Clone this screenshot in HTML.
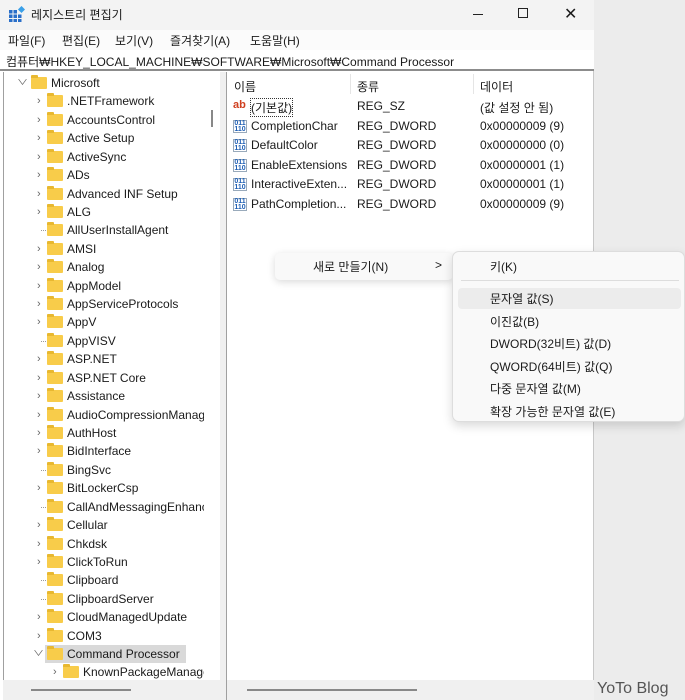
<!DOCTYPE html>
<html><head><meta charset="utf-8"><style>
*{margin:0;padding:0;box-sizing:border-box}
body{width:685px;height:700px;overflow:hidden;background:#ececec;font-family:"Liberation Sans","Noto Sans CJK KR",sans-serif;font-size:12px;color:#1a1a1a;position:relative}
.abs{position:absolute;white-space:nowrap}
.win{left:0;top:0;width:594px;height:700px;background:#fff;border-right:1px solid #c8c8c8}
.title{left:0;top:0;width:594px;height:30px;background:#f3f3f3}
.menu{left:0;top:30px;width:594px;height:20px;background:#fbfbfb}
.menu span{position:absolute;top:2px;font-size:12px;white-space:nowrap}
.addr{left:0;top:50px;width:594px;height:21px;background:#fff;border-bottom:2px solid #8c8c8c;font-size:12px;padding:3px 0 0 6px;white-space:nowrap}
.tree{left:3px;top:72px;width:217px;height:628px;background:#fff;border-left:1px solid #a0a0a0;overflow:hidden}
.row{position:absolute;height:18px;white-space:nowrap;font-size:12px;line-height:18px;overflow:hidden}
.fold{position:absolute;width:16px;height:12px;background:#f8cc4a;border-radius:1px;top:3px}
.fold:before{content:"";position:absolute;left:0;top:-2px;width:7px;height:3px;background:#e8b830;border-radius:1px 1px 0 0}
.chev{position:absolute;font-size:11px;color:#666;top:0}
.vsb{left:211px;top:110px;width:2px;height:17px;background:#888}
.hbar1{left:3px;top:680px;width:217px;height:20px;background:#f0f0f0}
.hbar2{left:227px;top:680px;width:367px;height:20px;background:#f0f0f0}
.split{left:220px;top:72px;width:7px;height:628px;background:#f0f0f0;border-right:1px solid #a0a0a0}
.hdr span{position:absolute;top:78px;font-size:12px;white-space:nowrap}
.ic{position:absolute;width:14px;height:13px;font-size:7px;font-weight:bold;line-height:6px;color:#1f5fb4;text-align:center;border:1px solid #9ab;padding-top:0}
.menu2{left:452px;top:251px;width:233px;height:171px;background:#f9f9f9;border:1px solid #ddd;border-radius:7px;box-shadow:0 4px 10px rgba(0,0,0,.15)}
.mi{position:absolute;left:37px;font-size:12px;white-space:nowrap}
</style></head><body>
<div class="abs win"></div>
<div class="abs title">
<svg class="abs" style="left:9px;top:6px" width="16" height="16"><g fill="#2a6fc9"><rect x="0" y="4" width="3.5" height="3.5"/><rect x="4.5" y="4" width="3.5" height="3.5"/><rect x="0" y="8.5" width="3.5" height="3.5"/><rect x="4.5" y="8.5" width="3.5" height="3.5"/><rect x="9" y="8.5" width="3.5" height="3.5"/><rect x="0" y="13" width="3.5" height="3"/><rect x="4.5" y="13" width="3.5" height="3"/><rect x="9" y="13" width="3.5" height="3"/></g><rect x="10" y="1" width="5" height="5" fill="#3aa0e8" transform="rotate(45 12.5 3.5)"/></svg>
<span class="abs" style="left:31px;top:6px;font-size:12px">레지스트리 편집기</span>
<div class="abs" style="left:473px;top:14px;width:10px;height:1px;background:#222"></div>
<div class="abs" style="left:518px;top:8px;width:10px;height:10px;border:1px solid #222"></div>
<span class="abs" style="left:564px;top:4px;font-size:16px;font-weight:300">✕</span>
</div>
<div class="abs menu"><span style="left:8px">파일(F)</span><span style="left:62px">편집(E)</span><span style="left:115px">보기(V)</span><span style="left:170px">즐겨찾기(A)</span><span style="left:250px">도움말(H)</span></div>
<div class="abs addr">컴퓨터₩HKEY_LOCAL_MACHINE₩SOFTWARE₩Microsoft₩Command Processor</div>
<div class="abs tree" id="tree"></div>
<div class="abs vsb"></div>
<div class="abs hbar1"><div class="abs" style="left:28px;top:9px;width:100px;height:2px;background:#888"></div></div>
<div class="abs split"></div>
<div class="abs hbar2"><div class="abs" style="left:20px;top:9px;width:170px;height:2px;background:#888"></div></div>
<div class="abs hdr"><span style="left:234px">이름</span><span style="left:357px">종류</span><span style="left:480px">데이터</span>
<div class="abs" style="left:350px;top:74px;width:1px;height:20px;background:#e5e5e5"></div>
<div class="abs" style="left:473px;top:74px;width:1px;height:20px;background:#e5e5e5"></div></div>
<div id="vals"></div>
<div class="abs" style="left:275px;top:253px;width:178px;height:27px;background:#f9f9f9;border-radius:5px;box-shadow:0 2px 8px rgba(0,0,0,.15)">
<span class="abs" style="left:38px;top:5px">새로 만들기(N)</span><span class="abs" style="left:160px;top:5px">&gt;</span></div>
<div class="abs menu2">
<span class="mi" style="top:6px">키(K)</span>
<div class="abs" style="left:8px;top:28px;width:218px;height:1px;background:#ddd"></div>
<div class="abs" style="left:5px;top:36px;width:223px;height:21px;background:#ececec;border-radius:4px"></div>
<span class="mi" style="top:38px">문자열 값(S)</span>
<span class="mi" style="top:61px">이진값(B)</span>
<span class="mi" style="top:83px">DWORD(32비트) 값(D)</span>
<span class="mi" style="top:106px">QWORD(64비트) 값(Q)</span>
<span class="mi" style="top:128px">다중 문자열 값(M)</span>
<span class="mi" style="top:151px">확장 가능한 문자열 값(E)</span>
</div>
<span class="abs" style="left:597px;top:680px;font-size:16px;color:#555">YoTo Blog</span>
<script>
var items=[["Microsoft",0,"v"],[".NETFramework",1,">"],["AccountsControl",1,">"],["Active Setup",1,">"],["ActiveSync",1,">"],["ADs",1,">"],["Advanced INF Setup",1,">"],["ALG",1,">"],["AllUserInstallAgent",1,""],["AMSI",1,">"],["Analog",1,">"],["AppModel",1,">"],["AppServiceProtocols",1,">"],["AppV",1,">"],["AppVISV",1,""],["ASP.NET",1,">"],["ASP.NET Core",1,">"],["Assistance",1,">"],["AudioCompressionManager",1,">"],["AuthHost",1,">"],["BidInterface",1,">"],["BingSvc",1,""],["BitLockerCsp",1,">"],["CallAndMessagingEnhancement",1,""],["Cellular",1,">"],["Chkdsk",1,">"],["ClickToRun",1,">"],["Clipboard",1,""],["ClipboardServer",1,""],["CloudManagedUpdate",1,">"],["COM3",1,">"],["Command Processor",1,"v"],["KnownPackageManager",2,">"]];
var h="";items.forEach(function(it,i){var y=2+i*18.42;var x=it[1]==0?0:it[1]==1?16:32;
if(i==31)h+='<div class="abs" style="left:41px;top:'+(y)+'px;width:141px;height:18px;background:#d9d9d9"></div>';
h+='<div class="row" style="left:0;top:'+y+'px;width:200px">';
if(it[2]=="v")h+='<span class="chev" style="left:'+(x+13)+'px;transform:scaleY(.7)">∨</span>';
else if(it[2]==">")h+='<span class="chev" style="left:'+(x+17)+'px">›</span>';
else h+='<span class="abs" style="left:'+(x+21)+'px;top:9px;width:7px;border-top:1px dotted #999"></span>';
h+='<span class="fold" style="left:'+(x+27)+'px"></span><span class="abs" style="left:'+(x+47)+'px;top:0">'+it[0]+'</span></div>';});
document.getElementById('tree').innerHTML=h;
var v=[["(기본값)","REG_SZ","(값 설정 안 됨)",1],["CompletionChar","REG_DWORD","0x00000009 (9)"],["DefaultColor","REG_DWORD","0x00000000 (0)"],["EnableExtensions","REG_DWORD","0x00000001 (1)"],["InteractiveExten...","REG_DWORD","0x00000001 (1)"],["PathCompletion...","REG_DWORD","0x00000009 (9)"]];
h="";v.forEach(function(r,i){var y=99+i*19.5;
h+=r[3]?'<span class="abs" style="left:233px;top:'+(y)+'px;font-size:11px;font-weight:bold;color:#d04020;line-height:12px">ab</span>':'<span class="ic" style="left:233px;top:'+(y+1)+'px">011<br>110</span>';
h+='<span class="abs" style="left:251px;top:'+y+'px;'+(r[3]?'outline:1px dotted #333;':'')+'">'+r[0]+'</span><span class="abs" style="left:357px;top:'+y+'px">'+r[1]+'</span><span class="abs" style="left:480px;top:'+y+'px">'+r[2]+'</span>';});
document.getElementById('vals').innerHTML=h;
</script>
</body></html>
